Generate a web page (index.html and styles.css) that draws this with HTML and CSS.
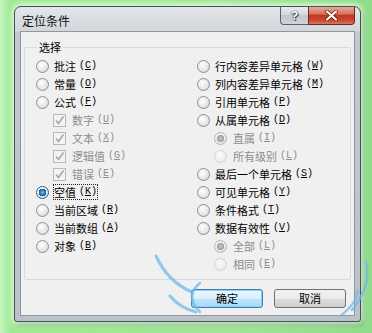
FILE: index.html
```html
<!DOCTYPE html>
<html lang="zh-CN">
<head>
<meta charset="utf-8">
<title>定位条件</title>
<link rel="stylesheet" href="styles.css">
</head>
<body>
<div class="desk">
  <div class="win">
    <div class="titlebar">
      <span class="title">定位条件</span>
      <div class="caps">
        <span class="cap help">?</span>
        <span class="cap close"><svg width="13" height="11" viewBox="0 0 13 11"><path d="M2 1.5 L11 9.5 M11 1.5 L2 9.5" stroke="#5b1a10" stroke-width="3.6" stroke-linecap="round"/><path d="M2 1.5 L11 9.5 M11 1.5 L2 9.5" stroke="#fff" stroke-width="2.2" stroke-linecap="round"/></svg></span>
      </div>
    </div>
    <div class="client">
      <fieldset class="group">
        <legend>选择</legend>
        <div class="cols">
          <div class="col">
            <div class="row"><span class="radio"></span><span class="lbl">批注<span class="mn">(<u>C</u>)</span></span></div>
            <div class="row"><span class="radio"></span><span class="lbl">常量<span class="mn">(<u>O</u>)</span></span></div>
            <div class="row"><span class="radio"></span><span class="lbl">公式<span class="mn">(<u>F</u>)</span></span></div>
            <div class="row sub dis"><span class="check"><svg width="11" height="11" viewBox="0 0 11 11"><path d="M2 5.5 L4.5 8.5 L9.5 1.5" fill="none" stroke="#a6a6a6" stroke-width="1.6"/></svg></span><span class="lbl">数字<span class="mn">(<u>U</u>)</span></span></div>
            <div class="row sub dis"><span class="check"><svg width="11" height="11" viewBox="0 0 11 11"><path d="M2 5.5 L4.5 8.5 L9.5 1.5" fill="none" stroke="#a6a6a6" stroke-width="1.6"/></svg></span><span class="lbl">文本<span class="mn">(<u>X</u>)</span></span></div>
            <div class="row sub dis"><span class="check"><svg width="11" height="11" viewBox="0 0 11 11"><path d="M2 5.5 L4.5 8.5 L9.5 1.5" fill="none" stroke="#a6a6a6" stroke-width="1.6"/></svg></span><span class="lbl">逻辑值<span class="mn">(<u>G</u>)</span></span></div>
            <div class="row sub dis"><span class="check"><svg width="11" height="11" viewBox="0 0 11 11"><path d="M2 5.5 L4.5 8.5 L9.5 1.5" fill="none" stroke="#a6a6a6" stroke-width="1.6"/></svg></span><span class="lbl">错误<span class="mn">(<u>E</u>)</span></span></div>
            <div class="row"><span class="radio on"></span><span class="lbl focus">空值<span class="mn">(<u>K</u>)</span></span></div>
            <div class="row"><span class="radio"></span><span class="lbl">当前区域<span class="mn">(<u>R</u>)</span></span></div>
            <div class="row"><span class="radio"></span><span class="lbl">当前数组<span class="mn">(<u>A</u>)</span></span></div>
            <div class="row"><span class="radio"></span><span class="lbl">对象<span class="mn">(<u>B</u>)</span></span></div>
          </div>
          <div class="col">
            <div class="row"><span class="radio"></span><span class="lbl">行内容差异单元格<span class="mn">(<u>W</u>)</span></span></div>
            <div class="row"><span class="radio"></span><span class="lbl">列内容差异单元格<span class="mn">(<u>M</u>)</span></span></div>
            <div class="row"><span class="radio"></span><span class="lbl">引用单元格<span class="mn">(<u>P</u>)</span></span></div>
            <div class="row"><span class="radio"></span><span class="lbl">从属单元格<span class="mn">(<u>D</u>)</span></span></div>
            <div class="row sub dis"><span class="radio dot"></span><span class="lbl">直属<span class="mn">(<u>I</u>)</span></span></div>
            <div class="row sub dis"><span class="radio faint"></span><span class="lbl">所有级别<span class="mn">(<u>L</u>)</span></span></div>
            <div class="row"><span class="radio"></span><span class="lbl">最后一个单元格<span class="mn">(<u>S</u>)</span></span></div>
            <div class="row"><span class="radio"></span><span class="lbl">可见单元格<span class="mn">(<u>Y</u>)</span></span></div>
            <div class="row"><span class="radio"></span><span class="lbl">条件格式<span class="mn">(<u>T</u>)</span></span></div>
            <div class="row"><span class="radio"></span><span class="lbl">数据有效性<span class="mn">(<u>V</u>)</span></span></div>
            <div class="row sub dis"><span class="radio dot"></span><span class="lbl">全部<span class="mn">(<u>L</u>)</span></span></div>
            <div class="row sub dis"><span class="radio faint"></span><span class="lbl">相同<span class="mn">(<u>E</u>)</span></span></div>
          </div>
        </div>
      </fieldset>
      <div class="btns">
        <button class="btn def">确定</button>
        <button class="btn">取消</button>
      </div>
    </div>
  </div>
  <svg class="wm" width="372" height="333" viewBox="0 0 372 333">
    <g fill="none" stroke="#6fb8ea" stroke-opacity="0.75" stroke-linecap="round">
      <path d="M156 256 Q168 282 192 292" stroke-width="3"/>
      <path d="M170 296 Q180 308 196 312" stroke-width="3"/>
      <path d="M200 283 Q184 296 200 312" stroke-width="2.5"/>
      <path d="M366 262 Q372 285 352 310" stroke-width="2.5"/>
      <path d="M358 290 Q356 305 340 316" stroke-width="2"/>
    </g>
  </svg>
</div>
</body>
</html>
```

FILE: styles.css
```css
* { box-sizing: border-box; }
html, body { margin: 0; padding: 0; }
body {
  width: 372px;
  height: 333px;
  overflow: hidden;
  background: #9ee69a;
  font-family: "Noto Sans CJK SC", "Liberation Sans", sans-serif;
}
.desk {
  position: relative;
  width: 372px;
  height: 333px;
  padding: 6px 0 0 14px;
  background:
    linear-gradient(90deg, #c6f6bf 0, #9fea98 10px, #a2e69c 60%, #8fdc8c 100%);
}
.win {
  width: 347px;
  height: 316px;
  border: 1px solid #4a4f55;
  border-radius: 7px 7px 3px 3px;
  background: linear-gradient(180deg, #e3e6ea 0, #d2d7dc 24px, #c2c8ce 26px, #bcc2c9 100%);
  padding: 0 5px 5px 5px;
  box-shadow: 0 0 5px 2px rgba(235, 255, 230, 0.85), 2px 3px 4px rgba(40, 80, 40, 0.45);
}
.titlebar {
  height: 24px;
  display: flex;
  align-items: flex-start;
  justify-content: space-between;
}
.title {
  font-size: 12px;
  line-height: 14px;
  margin: 7px 0 0 2px;
  color: #111;
}
.caps {
  display: flex;
  margin-right: 0;
}
.cap {
  height: 18px;
  display: flex;
  align-items: center;
  justify-content: center;
  border: 1px solid #5d6166;
  border-top: none;
}
.help {
  width: 28px;
  border-radius: 0 0 0 4px;
  border-right: none;
  background: linear-gradient(180deg, #e7eaee 0, #d5d9de 45%, #c2c7cd 50%, #cfd4d9 100%);
  color: #fff;
  font-family: "Liberation Sans", sans-serif;
  font-weight: bold;
  font-size: 13px;
  text-shadow: 0 0 1px #333, 0 0 1px #333, 1px 1px 0 #555;
}
.close {
  width: 47px;
  border-radius: 0 0 4px 0;
  border-color: #6a2a1f;
  background: linear-gradient(180deg, #e8a898 0, #d9745e 40%, #c2361f 50%, #c94a31 80%, #db7a5e 100%);
}
.client {
  height: 285px;
  border: 1px solid #8f969d;
  background: #f0f0f0;
  padding: 8px 3px 0 3px;
}
.group {
  margin: 0;
  border: 1px solid #d5dbe0;
  border-radius: 2px;
  padding: 3px 0 6px 11px;
  min-width: 0;
}
.group legend {
  font-size: 11px;
  line-height: 14px;
  padding: 0 2px;
  margin-left: 1px;
  color: #000;
}
.cols {
  display: grid;
  grid-template-columns: 161px 1fr;
}
.row {
  height: 18px;
  display: flex;
  align-items: center;
  gap: 4px;
  font-size: 11px;
  color: #000;
  white-space: nowrap;
}
.row.sub { padding-left: 17px; gap: 5px; }
.row.dis { color: #8d8d8d; }
.lbl {
  display: flex;
  align-items: center;
  line-height: 14px;
  border: 1px solid transparent;
  padding: 0 0 0 0;
}
.lbl.focus { border: 1px dotted #222; }
.mn {
  font-family: "Liberation Mono", monospace;
  font-size: 10px;
  margin-left: 3px;
}
.mn u { text-underline-offset: 1px; }
.radio {
  width: 13px;
  height: 13px;
  flex: none;
  border-radius: 50%;
  border: 1px solid #8e8f8f;
  background: radial-gradient(circle at 40% 35%, #ffffff 0, #eeeeee 40%, #cfcfcf 100%);
}
.radio.on {
  border-color: #2c628b;
  background:
    radial-gradient(circle at 50% 50%, #7ec6f4 0, #2a86c8 2px, #1b5a94 3.6px, transparent 4px),
    radial-gradient(circle at 40% 35%, #ffffff 0, #e8eef3 50%, #c5d2dc 100%);
}
.radio.dot {
  border-color: #b4b4b4;
  background:
    radial-gradient(circle at 50% 50%, #c8c8c8 0, #9d9d9d 3.4px, transparent 3.9px),
    radial-gradient(circle at 40% 35%, #ffffff 0, #ececec 50%, #d9d9d9 100%);
}
.radio.faint {
  border-color: #d2d2d2;
  background: radial-gradient(circle at 40% 35%, #fafafa 0, #f0f0f0 50%, #e6e6e6 100%);
}
.check {
  width: 13px;
  height: 13px;
  flex: none;
  border: 1px solid #b8b8b8;
  background: #f4f4f4;
  display: flex;
  align-items: center;
  justify-content: center;
}
.btns {
  display: flex;
  justify-content: flex-end;
  gap: 11px;
  margin-top: 9px;
  padding-right: 5px;
}
.btn {
  width: 72px;
  height: 19px;
  padding: 0;
  border: 1px solid #707070;
  border-radius: 3px;
  background: linear-gradient(180deg, #f2f2f2 0, #ebebeb 50%, #dddddd 51%, #cfcfcf 100%);
  font-family: "Noto Sans CJK SC", sans-serif;
  font-size: 11px;
  line-height: 15px;
  color: #000;
}
.btn.def {
  border-color: #3c7fb1;
  box-shadow: inset 0 0 0 1px #8fd1f5;
  background: linear-gradient(180deg, #eaf6fd 0, #d9f0fc 50%, #bee6fd 51%, #a7d9f5 100%);
}
.wm {
  position: absolute;
  left: 0;
  top: 0;
  pointer-events: none;
}
```
